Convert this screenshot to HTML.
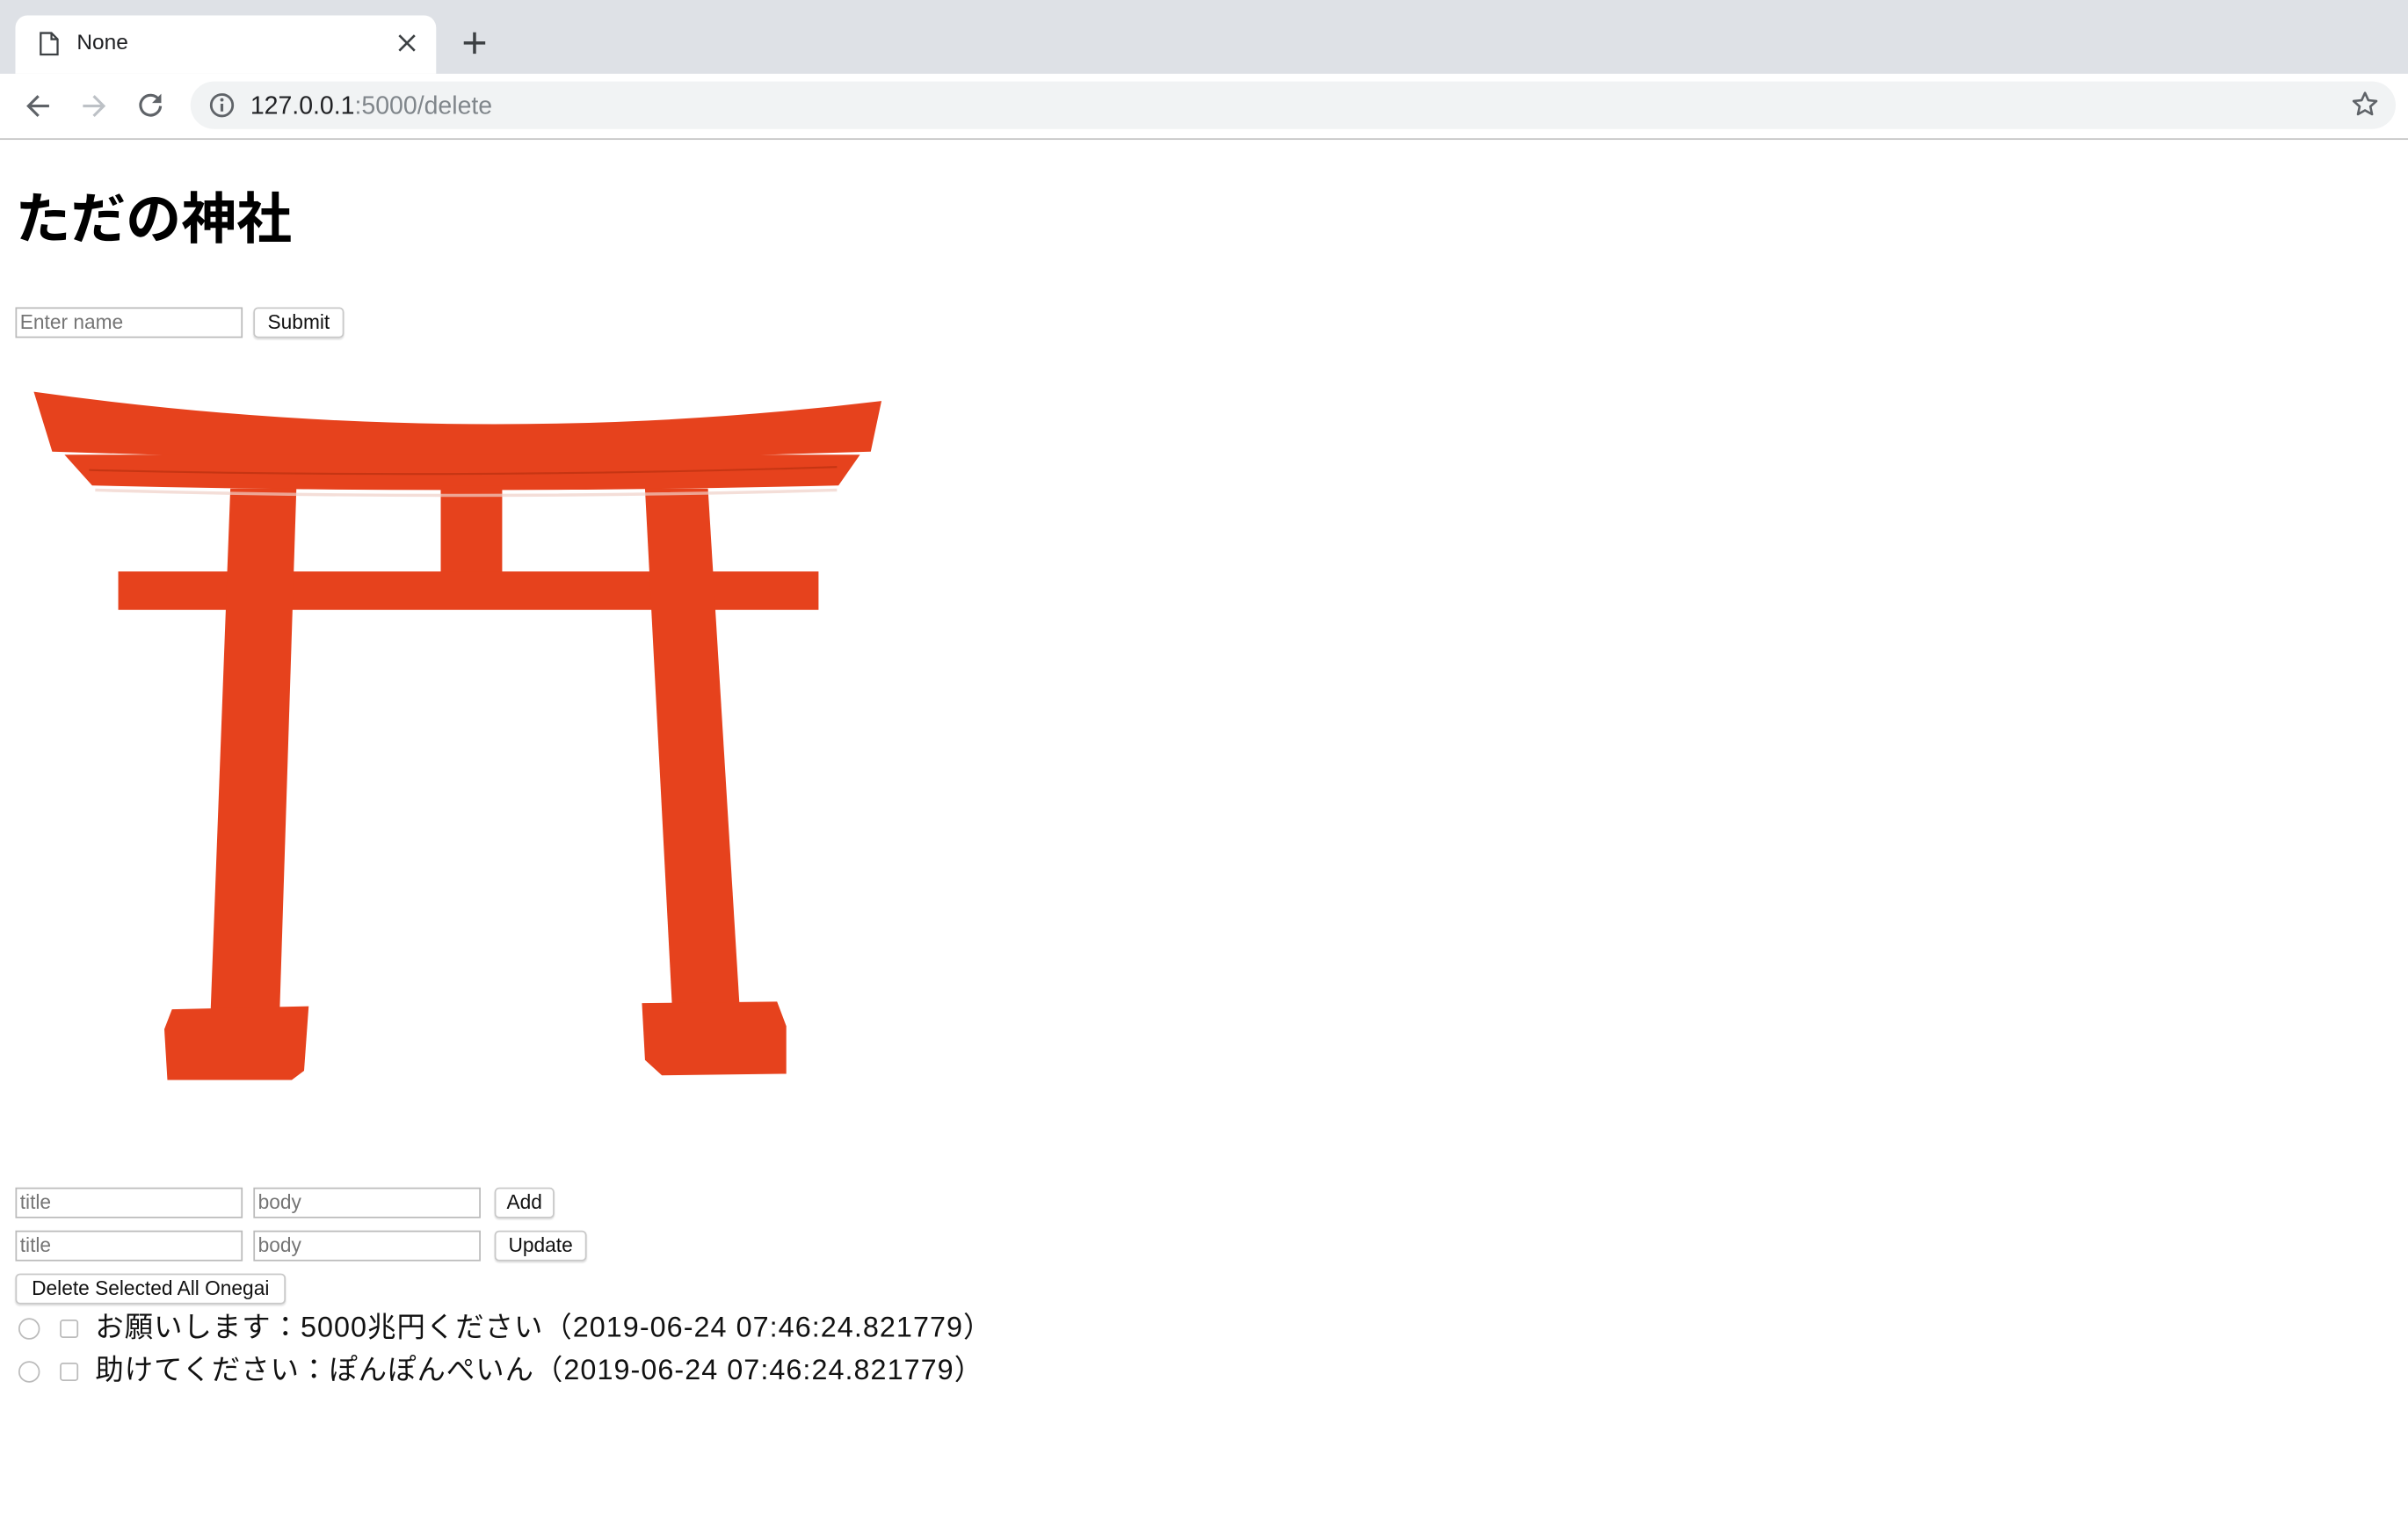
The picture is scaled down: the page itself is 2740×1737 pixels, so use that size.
<!DOCTYPE html>
<html><head><meta charset="utf-8"><style>
html,body{margin:0;padding:0;width:2740px;height:1736px;overflow:hidden;background:#fff;}
#w{position:absolute;left:0;top:0;width:1568px;height:994px;transform:scale(1.74745);transform-origin:0 0;font-family:"Liberation Sans","Noto Sans CJK JP",sans-serif;}
.a{position:absolute;}
.inp{position:absolute;height:20px;box-sizing:border-box;border:1px solid #bbb;font-size:13px;color:#757575;padding:1px 2px;line-height:16px;}
.btn{position:absolute;height:20px;box-sizing:border-box;border:1px solid #c8c8c8;border-radius:3px;font-size:13px;color:#111;text-align:center;line-height:18px;box-shadow:0 1px 1px rgba(0,0,0,.12);background:#fff;}
.row{position:absolute;left:62px;font-size:18.5px;letter-spacing:0.6px;color:#111;white-space:nowrap;}
.rad{position:absolute;width:14px;height:14px;border:1px solid #bbb;border-radius:50%;box-sizing:border-box;}
.chk{position:absolute;width:12px;height:12px;border:1px solid #bbb;border-radius:2px;box-sizing:border-box;}
</style></head><body><div id="w">
<div class="a" style="left:0;top:0;width:1568px;height:48px;background:#dee1e6"></div>
<div class="a" style="left:10px;top:10px;width:274px;height:38px;background:#fff;border-radius:8px 8px 0 0"></div>
<svg class="a" style="left:25px;top:20px" width="14" height="17" viewBox="0 0 14 17"><path d="M1.5 1.5h7l4 4v10h-11z M8.5 1.5v4h4" fill="none" stroke="#3c4043" stroke-width="1.3"/></svg>
<div class="a" style="left:50px;top:19px;font-size:14px;color:#202124">None</div>
<svg class="a" style="left:259px;top:22px" width="12" height="12"><path d="M1 1L11 11M11 1L1 11" stroke="#3c4043" stroke-width="1.5"/></svg>
<svg class="a" style="left:301px;top:20px" width="16" height="16"><path d="M8 1v14M1 8h14" stroke="#3c4043" stroke-width="2"/></svg>
<div class="a" style="left:0;top:90px;width:1568px;height:1px;background:#c4c4c4"></div>
<svg class="a" style="left:15px;top:59px" width="20" height="20"><path d="M17 10H4M10 3.5L3.5 10 10 16.5" fill="none" stroke="#5f6368" stroke-width="1.8"/></svg>
<svg class="a" style="left:51px;top:59px" width="20" height="20"><path d="M3 10H16M10 3.5L16.5 10 10 16.5" fill="none" stroke="#bdc1c6" stroke-width="1.8"/></svg>
<svg class="a" style="left:88px;top:58px" width="20" height="20"><path d="M15.5 7A6.5 6.5 0 1 0 16.5 11" fill="none" stroke="#5f6368" stroke-width="1.8"/><path d="M17 3v6h-6z" fill="#5f6368"/></svg>
<div class="a" style="left:124px;top:53px;width:1436px;height:31px;background:#f1f3f4;border-radius:16px"></div>
<svg class="a" style="left:136px;top:60px" width="17" height="17"><circle cx="8.5" cy="8.5" r="7" fill="none" stroke="#5f6368" stroke-width="1.6"/><path d="M8.5 7.5v5" stroke="#5f6368" stroke-width="1.8"/><circle cx="8.5" cy="5" r="1.1" fill="#5f6368"/></svg>
<div class="a" style="left:163px;top:60px;font-size:16.3px;color:#202124;white-space:nowrap">127.0.0.1<span style="color:#80868b">:5000/delete</span></div>
<svg class="a" style="left:1531px;top:59px" width="18" height="18" viewBox="0 0 18 18"><path d="M9 1.5l2.2 4.8 5.2.5-3.9 3.5 1.1 5.1L9 12.8l-4.6 2.6 1.1-5.1L1.6 6.8l5.2-.5z" fill="none" stroke="#5f6368" stroke-width="1.5" stroke-linejoin="round"/></svg>

<div class="a" style="left:10px;top:114px;font-size:36px;font-weight:bold;color:#000;white-space:nowrap">ただの神社</div>
<div class="inp" style="left:10px;top:200px;width:148px">Enter name</div>
<div class="btn" style="left:165px;top:200px;width:59px">Submit</div>

<svg class="a" style="left:0;top:0" width="1568" height="994" viewBox="0 0 1568 994">
<g fill="#e6421d">
<path d="M22 255 Q300 294 574 261 L567 294 L300 302 L34 294 Z"/>
<path d="M42 296 L560 296 L546 316 Q300 322 60 316 Z"/>
<rect x="287" y="316" width="40" height="58"/>
<rect x="77" y="372" width="456" height="25"/>
<path d="M150 318 L193 318 L182 662 L137 662 Z"/>
<path d="M420 318 L461 318 L482 662 L438 662 Z"/>
<path d="M112 657 L201 655 L198 697 L190 703 L109 703 L107 670 Z"/>
<path d="M418 653 L506 652 L512 668 L512 699 L431 700 L420 690 Z"/>
</g>
<path d="M58 306 Q300 312 545 304" stroke="#b8300f" stroke-width="1.2" fill="none" opacity=".7"/>
<path d="M62 319 Q300 326 545 319" stroke="#f0d0c8" stroke-width="2" fill="none" opacity=".7"/>
</svg>

<div class="inp" style="left:10px;top:773px;width:148px">title</div>
<div class="inp" style="left:165px;top:773px;width:148px">body</div>
<div class="btn" style="left:322px;top:773px;width:39px">Add</div>
<div class="inp" style="left:10px;top:801px;width:148px">title</div>
<div class="inp" style="left:165px;top:801px;width:148px">body</div>
<div class="btn" style="left:322px;top:801px;width:60px">Update</div>
<div class="btn" style="left:10px;top:829px;width:176px">Delete Selected All Onegai</div>

<div class="rad" style="left:12px;top:858px"></div>
<div class="chk" style="left:39px;top:859px"></div>
<div class="row" style="top:850px">お願いします：5000兆円ください（2019-06-24 07:46:24.821779）</div>
<div class="rad" style="left:12px;top:886px"></div>
<div class="chk" style="left:39px;top:887px"></div>
<div class="row" style="top:878px">助けてください：ぽんぽんぺいん（2019-06-24 07:46:24.821779）</div>
</div></body></html>
